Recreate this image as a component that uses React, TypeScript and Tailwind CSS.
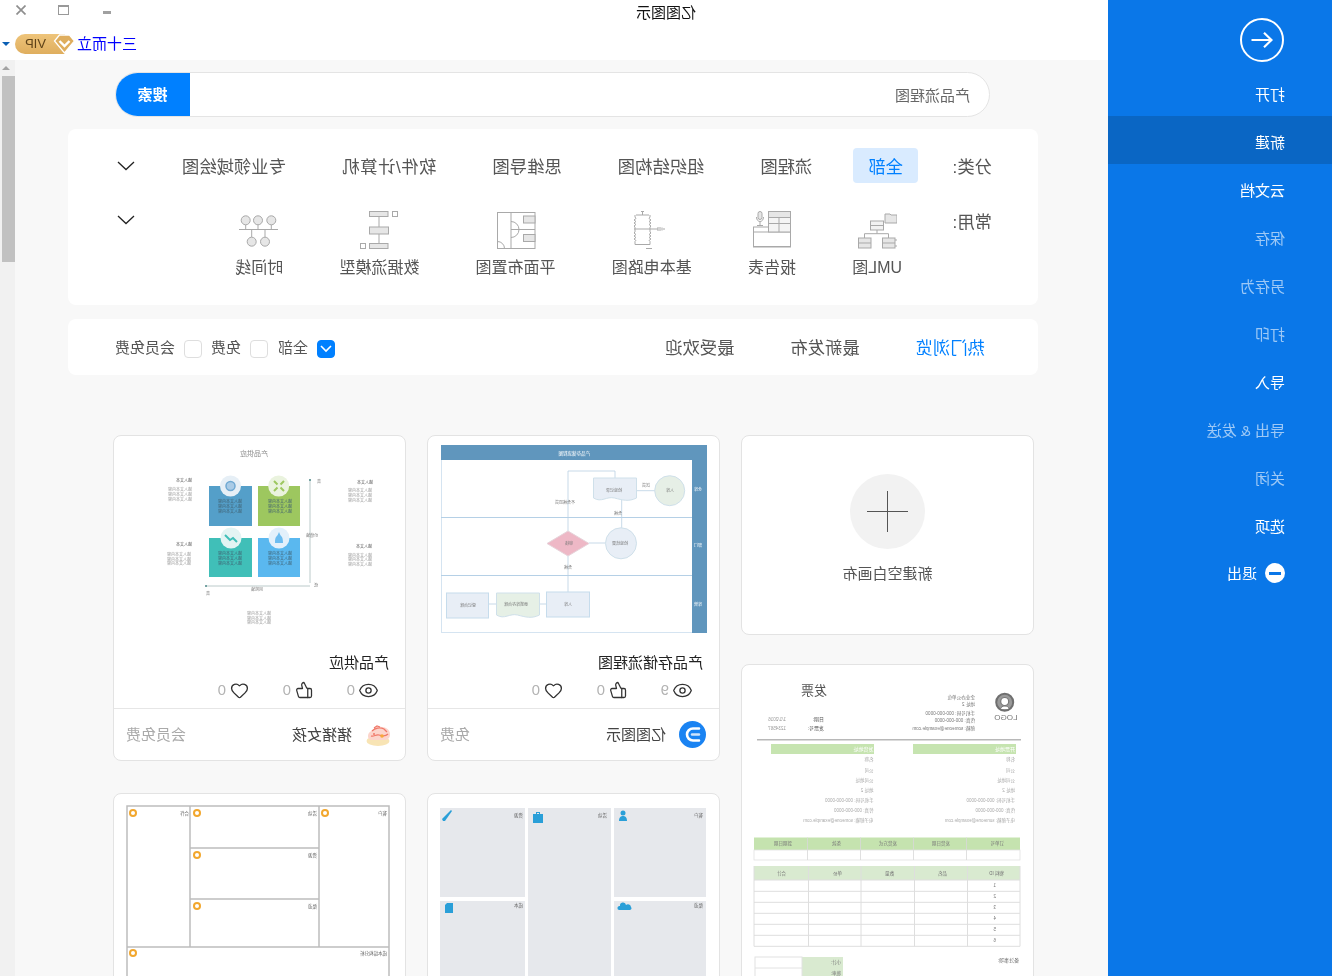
import React from 'react';
import { Eye, Heart, ThumbsUp } from 'lucide-react';

const GRAY = '#a9a9a9';
const FILL = '#e6e6e6';

const menu = [
  { label: '打开', on: true },
  { label: '新建', on: true, active: true },
  { label: '云文档', on: true },
  { label: '保存' },
  { label: '另存为' },
  { label: '打印' },
  { label: '导入', on: true },
  { label: '导出 & 发送' },
  { label: '关闭' },
  { label: '选项', on: true },
];

const categories = ['全部', '流程图', '组织结构图', '思维导图', '软件/计算机', '专业领域绘图'];

// the little drawings are written in picture coordinates, the svg flips itself back
const UmlIcon = () => (
  <svg viewBox="0 0 40 40" className="w-10 h-10 -scale-x-100" fill="none" stroke={GRAY}>
    <path d="M28 4h5l1 1h6v8H28z" fill={FILL} />
    <rect x="13.5" y="11" width="13" height="9" fill="#f2f2f2" />
    <path d="M13.5 15.5h13M20 20v3.7M7.5 28v-4.3h24V28" />
    <rect x="1.5" y="28" width="12.5" height="10" fill={FILL} />
    <rect x="25.5" y="28" width="12.5" height="10" fill={FILL} />
    <path d="M1.5 33h12.500M25.500 33H38M38 30h2M38 36h2" />
  </svg>
);

const ReportIcon = () => (
  <svg viewBox="0 0 40 40" className="w-10 h-10 -scale-x-100" fill="none" stroke={GRAY}>
    <rect x="1.500" y="17" width="37" height="20" />
    <path d="M1.500 22h37M1.500 36.500h37" />
    <rect x="16.500" y="1.500" width="22" height="20.500" fill="#f4f4f4" />
    <rect x="16.500" y="1.500" width="22" height="6" fill={FILL} />
    <path d="M16.500 13.500h22M27 7.500V22" />
    <rect x="6" y="1.500" width="4" height="8" rx="2" fill={FILL} />
    <path d="M4.500 7c0 6 7 6 7 0M8 12v3M5 15.500h6" />
  </svg>
);

const CircuitIcon = () => (
  <svg viewBox="0 0 40 40" className="w-10 h-10 -scale-x-100" fill="none" stroke={GRAY}>
    <path d="M9 1.500h3M10.500 2v3M4 5h13" />
    <path d="M3 19v-2l-1-1 2-1.500-2-1.500 2-1.500-2-1.500 2-1.500L3 7V5" />
    <path d="M18 19v-2l1-1-2-1.500 2-1.500-2-1.500 2-1.500-2-1.500L18 7V5" />
    <path d="M2 19h24" />
    <path d="M26 17v4M28 17v4M30 17.500v3M32 18v2" />
    <path d="M3 19v3l-1 1 2 1.500-2 1.500 2 1.500-2 1.500 2 1.500-1 1v3h15" />
    <path d="M18 19v3l1 1-2 1.500 2 1.500-2 1.500 2 1.500-2 1.500 1 1v3" />
    <path d="M14 38.500h6" />
  </svg>
);

const PlanIcon = () => (
  <svg viewBox="0 0 40 40" className="w-10 h-10 -scale-x-100" fill="none" stroke={GRAY}>
    <rect x="1.500" y="2.500" width="37.500" height="36" />
    <path d="M15 2.500v36M15 19.500h24M15 11.500a8 8 0 0 1 0 16M1.500 31.500a7 7 0 0 1 7 7" />
    <rect x="27.500" y="6" width="11.500" height="7" fill={FILL} />
    <rect x="27.500" y="24.500" width="11.500" height="7" fill={FILL} />
  </svg>
);

const DataFlowIcon = () => (
  <svg viewBox="0 0 40 40" className="w-10 h-10 -scale-x-100" fill="none" stroke={GRAY}>
    <path d="M20 6.500v27" />
    <rect x="10.500" y="1.500" width="18.500" height="5" fill={FILL} />
    <rect x="10.500" y="17" width="19" height="7" fill={FILL} />
    <rect x="10.500" y="33.500" width="18.500" height="5" fill={FILL} />
    <rect x="33.500" y="1.500" width="5" height="5" />
    <rect x="1.500" y="33.500" width="5" height="5" />
  </svg>
);

const TimelineIcon = () => (
  <svg viewBox="0 0 40 40" className="w-10 h-10 -scale-x-100" fill="none" stroke={GRAY}>
    <path d="M0 19.500h39M6.700 15v5M19 15v5M32.300 15v5M12.700 19.500V27M26 19.500V27" />
    <circle cx="6.700" cy="10.300" r="4.500" fill={FILL} />
    <circle cx="19" cy="10.300" r="4.500" fill={FILL} />
    <circle cx="32.300" cy="10.300" r="4.500" fill={FILL} />
    <circle cx="12.700" cy="31.700" r="4.500" fill={FILL} />
    <circle cx="26" cy="31.700" r="4.500" fill={FILL} />
  </svg>
);

const common = [
  { label: 'UML图', icon: <UmlIcon /> },
  { label: '报告表', icon: <ReportIcon /> },
  { label: '基本电路图', icon: <CircuitIcon /> },
  { label: '平面布置图', icon: <PlanIcon /> },
  { label: '数据流模型', icon: <DataFlowIcon /> },
  { label: '时间线', icon: <TimelineIcon /> },
];

const Lines = ({ x, ys, size = 4, fill = '#8a8a8a', text = '输入文本内容' }: { x: number; ys: number[]; size?: number; fill?: string; text?: string }) => (
  <>
    {ys.map((y) => (
      <text key={y} x={x} y={y} fontSize={size} fill={fill}>
        {text}
      </text>
    ))}
  </>
);

const SupplyThumb = () => (
  <svg viewBox="1 1 291 216" className="block w-full h-[216px] blur-[0.3px]">
    <text x="138" y="21" fontSize="7" fill="#888">产品供应</text>
    <rect x="154" y="51" width="43" height="40" fill="#549fc9" />
    <rect x="106" y="51" width="42" height="40" fill="#9dc75f" />
    <rect x="154" y="103" width="43" height="39" fill="#40bfb8" />
    <rect x="106" y="103" width="42" height="39" fill="#5ab8ef" />
    <circle cx="175.500" cy="51" r="10.500" fill="#e6eff6" />
    <circle cx="127.300" cy="51" r="10.500" fill="#eaf3de" />
    <circle cx="175" cy="103" r="10.500" fill="#e3f4f3" />
    <circle cx="127" cy="103" r="10.500" fill="#e3f0fb" />
    <circle cx="175.500" cy="51" r="4.500" fill="#a9cbe6" stroke="#6fa9d2" strokeWidth="1.500" />
    <path d="M122 46l3.500 3.500M132 46l-3.500 3.500M122 56l3.500-3.500M132 56l-3.500-3.500" stroke="#9dc75f" strokeWidth="2" />
    <path d="M169 107l4-4 3 2 5-5" fill="none" stroke="#40bfb8" strokeWidth="2" />
    <path d="M123 108c0-8 2-5 4-11 2 6 4 3 4 11z" fill="#6cbcf0" />
    <Lines x={164} ys={[68, 73, 78, 120, 125, 130]} fill="#3f5f6f" />
    <Lines x={114} ys={[68, 73, 78, 120, 125, 130]} fill="#3f5f6f" />
    <path d="M96 44v104M96 151h104" stroke="#a9bcbc" strokeWidth="0.800" fill="none" />
    <circle cx="96" cy="45" r="1" fill="#4e8a8a" />
    <circle cx="200" cy="151" r="1" fill="#4e8a8a" />
    <Lines x={214} ys={[47]} text="输入文本" fill="#555" />
    <Lines x={214} ys={[56, 61, 66]} fill="#999" />
    <Lines x={33} ys={[49]} text="输入文本" fill="#555" />
    <Lines x={34} ys={[57, 62, 67]} fill="#999" />
    <Lines x={214} ys={[111]} text="输入文本" fill="#555" />
    <Lines x={215} ys={[121, 126, 130]} fill="#999" />
    <Lines x={34} ys={[113]} text="输入文本" fill="#555" />
    <Lines x={34} ys={[122, 126, 131]} fill="#999" />
    <Lines x={135} ys={[180, 185, 189]} fill="#999" />
    <text x="88" y="102" fontSize="4" fill="#777">价值轴</text>
    <text x="143" y="156" fontSize="4" fill="#777">风险轴</text>
    <text x="85" y="48" fontSize="4" fill="#777">高</text>
    <text x="88" y="152" fontSize="4" fill="#777">低</text>
    <text x="196" y="160" fontSize="4" fill="#777">高</text>
  </svg>
);

const FlowThumb = () => (
  <svg viewBox="1 1 291 216" className="block w-full h-[216px] blur-[0.3px]">
    <rect x="13.500" y="10.500" width="265" height="187" fill="#fff" stroke="#d5e4f1" />
    <rect x="13" y="10" width="266" height="15" fill="#6096bd" />
    <rect x="13" y="25" width="15" height="173" fill="#6096bd" />
    <path d="M28 82.500h251M28 140.500h251" stroke="#b5d0e6" strokeWidth="1" />
    <text x="130" y="20" fontSize="4.500" fill="#fff">产品存储流程图</text>
    <text x="18" y="56" fontSize="4" fill="#fff">仓库</text>
    <text x="18" y="112" fontSize="4" fill="#fff">部门</text>
    <text x="18" y="171" fontSize="4" fill="#fff">库管</text>
    <g fill="none" stroke="#b9cfe2" strokeWidth="0.800">
      <path d="M65 55.700h18M98.300 65v28M114.700 108H131M152 96V36h-47v7M152 121v36M173.700 169h6.500M224 169h7" />
    </g>
    <circle cx="50.300" cy="55.700" r="15" fill="#e6efe6" stroke="#cfe0ea" />
    <path d="M83.500 43h43v20c-8 5-13-2-21 0s-14 4-22 0z" fill="#e8eef6" stroke="#cfe0ea" />
    <circle cx="99" cy="108.300" r="15.500" fill="#e8eef6" stroke="#cfe0ea" />
    <path d="M131 108.500l21-12.500 21 12.500-21 12.500z" fill="#eeb8c6" stroke="#e6d3da" />
    <rect x="130.500" y="157" width="43" height="25" fill="#e8eef6" stroke="#c6dcec" />
    <path d="M180.500 158h43v22c-8 5-13-2-21 0s-14 4-22 0z" fill="#e6f0e6" stroke="#cfe0ea" />
    <rect x="231.500" y="158" width="42" height="25" fill="#e8eef6" stroke="#c6dcec" />
    <g fontSize="4" fill="#777">
      <text x="46" y="57">入库</text>
      <text x="98" y="57">检验记录</text>
      <text x="70" y="52">送货</text>
      <text x="98" y="80">合格</text>
      <text x="92" y="110">检验结果</text>
      <text x="147" y="110">审核</text>
      <text x="145" y="69">不合格退货</text>
      <text x="148" y="134">合格</text>
      <text x="148" y="171">入库</text>
      <text x="192" y="171">更新库存台账</text>
      <text x="244" y="172">登记台账</text>
    </g>
  </svg>
);

const InvoiceThumb = () => {
  const left = ['名称', '公司', '公司地址', '地址 2', '手机号码: 000-000-0000', '传真: 000-000-0000', '电子邮箱: someone@example.com'];
  const ys = [97, 108, 117.500, 128, 138, 148, 158];
  const rows = [216, 227.300, 238.300, 249.300, 260.300, 271.300, 282.300];
  return (
    <svg viewBox="1 1 291 320" className="block w-full h-[320px] blur-[0.35px]">
      <circle cx="29.300" cy="38.300" r="8.500" fill="#9a9a9a" stroke="#6f6f6f" strokeWidth="2" />
      <circle cx="29.300" cy="37.500" r="4" fill="#fff" stroke="#777" strokeWidth="1.200" />
      <path d="M25 45c0-4 8-4 8.500 0" fill="#fff" stroke="#777" />
      <text x="16.500" y="56" fontSize="8" fill="#777">LOGO</text>
      <g fontSize="4.600" fill="#777">
        <text x="59" y="34.500">企业办公单位</text>
        <text x="59" y="41.500">地址 2</text>
        <text x="59" y="50.500">手机号码: 000-000-0000</text>
        <text x="59" y="58">传真: 000-000-0000</text>
        <text x="59" y="66">邮箱: someone@example.com</text>
      </g>
      <text x="207" y="31" fontSize="13" fill="#555">发票</text>
      <g fontSize="5" fill="#555">
        <text x="210" y="56.500">日期:</text>
        <text x="210" y="66">发票号:</text>
      </g>
      <g fontSize="4.600" fill="#999">
        <text x="248" y="56.500">1/1/2016</text>
        <text x="248" y="66">1234567</text>
      </g>
      <path d="M13 75.700h264" stroke="#b8b8b8" strokeWidth="1.500" />
      <rect x="18" y="80" width="103" height="10" fill="#c6e4b0" />
      <rect x="160" y="80" width="103" height="10" fill="#c6e4b0" />
      <text x="19" y="87" fontSize="5" fill="#fff">开票地址</text>
      <text x="160.500" y="87" fontSize="5" fill="#fff">发货地址</text>
      {left.map((t, i) => (
        <text key={i} x={19} y={ys[i]} fontSize="4.500" fill="#aaa">{t}</text>
      ))}
      {left.map((t, i) => (
        <text key={i} x={160.500} y={ys[i]} fontSize="4.500" fill="#aaa">{t}</text>
      ))}
      <rect x="14" y="173.500" width="266" height="12.500" fill="#c5e3af" />
      <rect x="14" y="186" width="266" height="10" fill="#fff" stroke="#e2e2e2" strokeWidth="0.800" />
      <path d="M67.500 173.500V196M120.500 173.500V196M173.500 173.500V196M226.500 173.500V196" stroke="#d8d8d8" strokeWidth="0.800" />
      <g fontSize="4.500" fill="#777">
        <text x="30" y="181">订单号</text>
        <text x="84" y="181">发货日期</text>
        <text x="137" y="181">发货方式</text>
        <text x="193" y="181">条款</text>
        <text x="242" y="181">到期日期</text>
      </g>
      <rect x="14" y="202" width="266" height="14" fill="#d9ead0" />
      {rows.map((y) => (
        <path key={y} d={`M14 ${y}h266`} stroke="#dedede" strokeWidth="1" />
      ))}
      <path d="M14 202v80.300M66.500 202v80.300M119.500 202v80.300M173 202v80.300M225.500 202v80.300M280 202v80.300" stroke="#dedede" strokeWidth="1" />
      <g fontSize="4.500" fill="#777">
        <text x="30" y="211">物料 ID</text>
        <text x="87" y="211">品名</text>
        <text x="140" y="211">数量</text>
        <text x="192" y="211">单价</text>
        <text x="248" y="211">合计</text>
        {[1, 2, 3, 4, 5, 6].map((n, i) => (
          <text key={n} x="38" y={223 + i * 11}>{n}</text>
        ))}
      </g>
      <text x="15" y="298" fontSize="5" fill="#666">备注事项:</text>
      <rect x="191" y="293" width="41" height="30" fill="#d9ead0" />
      <rect x="232" y="293" width="47" height="30" fill="#fff" stroke="#e2e2e2" />
      <path d="M232 304h47" stroke="#e2e2e2" />
      <text x="193" y="300" fontSize="4.500" fill="#777">小计:</text>
      <text x="193" y="311" fontSize="4.500" fill="#777">税率:</text>
    </svg>
  );
};

const CanvasThumb = () => {
  const dots: [number, number, string, number, number][] = [
    [273, 20, '合作', 217, 20],
    [209, 20, '活动', 89, 20],
    [209, 62, '资源', 89, 62],
    [209, 113, '渠道', 89, 113],
    [81, 20, '客户', 19, 20],
    [273, 160, '成本结构分析', 19, 160],
  ];
  return (
    <svg viewBox="1 1 291 200" className="block w-full h-[200px] blur-[0.3px]">
      <g fill="none" stroke="#bdbdbd" strokeWidth="1.500">
        <rect x="17" y="13" width="262" height="190" />
        <path d="M216 13v141M87 13v141M87 55h129M87 106h129M17 154h262" />
      </g>
      {dots.map(([x, y, t, tx, ty]) => (
        <g key={t}>
          <circle cx={x} cy={y} r="4" fill="#f2a72e" />
          <circle cx={x} cy={y} r="2" fill="#fff" />
          <text x={tx} y={ty + 2} fontSize="4.500" fill="#666">{t}</text>
        </g>
      ))}
    </svg>
  );
};

const GridThumb = () => (
  <svg viewBox="1 1 291 200" className="block w-full h-[200px] blur-[0.3px]">
    <g fill="#e6e8ec">
      <rect x="14" y="15" width="92" height="89" />
      <rect x="14" y="108" width="92" height="100" />
      <rect x="109" y="15" width="83" height="200" />
      <rect x="195" y="15" width="85" height="89" />
      <rect x="195" y="108" width="85" height="100" />
    </g>
    <g fontSize="4.500" fill="#666">
      <text x="17" y="24">客户</text>
      <text x="113" y="24">活动</text>
      <text x="197" y="24">资源</text>
      <text x="17" y="114">渠道</text>
      <text x="197" y="114">成本</text>
    </g>
    <g fill="#2a9fd8">
      <circle cx="97" cy="20" r="2.500" />
      <path d="M93 28c0-4 2-5 4-5s4 1 4 5z" />
      <path d="M177 21h10v9h-10zM180 21v-2h4v2h-1v-1h-2v1z" />
      <path d="M268 18l1-1 9 9-1 2-2 0z" />
      <path d="M267 110h6l2 2v8h-8z" />
      <path d="M89 114a3 3 0 0 1 5-2 3 3 0 0 1 6 1 2 2 0 0 1 1 4H90a2 2 0 0 1-1-3z" />
    </g>
  </svg>
);

const EdrawLogo = () => (
  <svg viewBox="0 0 27 27" className="w-[27px] h-[27px] -scale-x-100">
    <circle cx="13.500" cy="13.500" r="13.500" fill="#1a83f2" />
    <path d="M20 7.500h-6a6 6 0 0 0 0 12h6" fill="none" stroke="#fff" strokeWidth="2.600" strokeLinecap="round" />
    <path d="M13 13.500h7" stroke="#cfe4fb" strokeWidth="2.400" strokeLinecap="round" />
  </svg>
);

const CakeLogo = () => (
  <svg viewBox="0 0 27 27" className="w-[27px] h-[27px] -scale-x-100 blur-[0.3px]">
    <ellipse cx="13" cy="20" rx="11.500" ry="5" fill="#f8e4b4" />
    <path d="M3 15c0-4 4-5 6-7 2-3 6-3 8-2 4 0 8 3 8 7 0 4-2 6-6 6H8c-3 0-5-1-5-4z" fill="#fcd5cc" />
    <path d="M7 10c3-3 8-4 12-2l3 3M6 15c3 1 5-2 8-1s6 2 9-1M9 7l3-2 3 1" fill="none" stroke="#f0796a" strokeWidth="1.300" />
    <circle cx="17" cy="15" r="1.800" fill="#f6a93b" />
    <circle cx="9" cy="13" r="1" fill="#f0796a" />
  </svg>
);

const Card = ({ title, views, avatar, author, tag, thumb }: { title: string; views: number; avatar: React.ReactNode; author: string; tag: string; thumb: React.ReactNode }) => (
  <div className="w-[293px] h-[326px] bg-white border border-[#e3e3e3] rounded-lg overflow-hidden shrink-0">
    {thumb}
    <div className="h-[22px] pl-[16px] text-[15px] leading-[22px] text-[#222]">{title}</div>
    <div className="flex h-[20px] mt-[6px] pl-[26px] text-[15px] leading-[20px] text-[#b3b3b3]">
      <div className="flex items-center gap-[3px] w-[66px]">
        <Eye size={21} strokeWidth={1.500} className="text-[#333]" />
        <span>{views}</span>
      </div>
      <div className="flex items-center gap-[4px] w-[64px]">
        <ThumbsUp size={18} strokeWidth={1.700} className="text-[#333]" />
        <span>0</span>
      </div>
      <div className="flex items-center gap-[4px]">
        <Heart size={19} strokeWidth={1.700} className="text-[#333]" />
        <span>0</span>
      </div>
    </div>
    <div className="flex items-center h-[52px] mt-[8px] pl-[13px] pr-[12px] border-t border-[#e6e6e6]">
      {avatar}
      <span className="ml-[13px] mt-[2px] text-[15px] text-[#444]">{author}</span>
      <span className="ml-auto mt-[2px] text-[15px] text-[#aaa]">{tag}</span>
    </div>
  </div>
);

const Chevron = () => (
  <svg width="18" height="10" viewBox="0 0 18 10" fill="none" stroke="#222" strokeWidth="1.300">
    <path d="M1 1l8 7.500L17 1" />
  </svg>
);

const Checkbox = ({ checked, label }: { checked?: boolean; label: string }) => (
  <div className="flex items-center gap-[9px]">
    <span className={`flex items-center justify-center w-[18px] h-[18px] rounded-[4px] border ${checked ? 'bg-[#0080ff] border-[#0080ff]' : 'bg-white border-[#dedede]'}`}>
      {checked && (
        <svg width="12" height="8" viewBox="0 0 12 8" fill="none" stroke="#fff" strokeWidth="1.600">
          <path d="M1 1l5 5 5-5" />
        </svg>
      )}
    </span>
    <span className="-mt-[2px] text-[15px] text-[#555]">{label}</span>
  </div>
);

export default function App() {
  return (
    <div className="flex w-[1332px] h-[976px] overflow-hidden -scale-x-100 bg-white font-['Liberation_Sans','Noto_Sans_CJK_SC',sans-serif]">
      {/* side menu */}
      <aside className="w-[224px] shrink-0 bg-[#0a77e8] text-[15px]">
        <div className="h-[68px] pt-[18px] pl-[48px]">
          <div className="flex items-center justify-center w-[44px] h-[44px] rounded-full border-[2.500px] border-white">
            <svg width="22" height="16" viewBox="0 0 22 16" fill="none" stroke="#fff" strokeWidth="2.200">
              <path d="M1.500 8H21.500M9 .8L1.500 8 9 15.200" />
            </svg>
          </div>
        </div>
        {menu.map((item) => (
          <div
            key={item.label}
            className={`flex items-center h-12 pl-[47px] pt-[6px] ${item.active ? 'bg-[#0a66c4]' : ''} ${item.on ? 'text-white' : 'text-white/60'}`}
          >
            {item.label}
          </div>
        ))}
        <div className="flex items-center h-12 pl-[47px] pt-1 text-white">
          <span className="flex items-center justify-center w-[20px] h-[20px] -mt-[2px] rounded-full bg-white">
            <span className="w-[12px] h-[3px] bg-[#0a77e8]" />
          </span>
          <span className="ml-[8px]">退出</span>
        </div>
      </aside>

      <main className="flex-1 flex flex-col min-w-0">
        {/* title bar */}
        <header className="h-[60px] shrink-0 bg-white relative">
          <div className="h-[24px] pt-px pl-[412px] text-[15px] leading-[24px] text-[#111]">亿图图示</div>
          <div className="flex items-center h-[24px] mt-[8px] pl-[971px]">
            <span className="text-[15px] text-[#0000ff]">三十而立</span>
            <span className="relative ml-[2px] w-[60px] h-[20px]">
              <span className="absolute left-[10px] right-0 top-0 bottom-0 rounded-r-full bg-gradient-to-b from-[#eec47a] to-[#dfae5e] text-[13px] leading-[20px] text-[#5f4319] pl-[19px]">VIP</span>
              <svg className="absolute -left-px top-0 -scale-x-100" width="23" height="20" viewBox="0 0 22 20">
                <path d="M6 1h10l5 6-10 12L1 7z" fill="#dfae5e" stroke="#fff" strokeWidth="1.300" />
                <path d="M6 7l5 5 5-5" fill="none" stroke="#fff" strokeWidth="2.400" />
              </svg>
            </span>
            <span className="ml-[5px] w-0 h-0 border-x-[4px] border-x-transparent border-t-[4px] border-t-[#0a5fb4]" />
          </div>
          <div className="absolute right-[103px] top-[11px] w-[8px] h-[3px] bg-[#a0a0a0]" />
          <div className="absolute right-[58px] top-[5px] w-[11px] h-[10px] border border-[#999] border-t-2" />
          <svg className="absolute right-[16px] top-[5px]" width="10" height="10" viewBox="0 0 10 10" stroke="#8f8f8f" strokeWidth="1.700">
            <path d="M.5.5l9 9M9.500.5l-9 9" />
          </svg>
        </header>

        <div className="flex-1 flex min-h-0">
          <div className="flex-1 bg-[#f8f8f8] overflow-hidden">
            {/* search */}
            <div className="flex w-[875px] h-[45px] ml-[118px] mt-[12px] bg-white border border-[#e4e4e4] rounded-full overflow-hidden">
              <div className="flex-1 pl-[19px] text-[15px] leading-[45px] text-[#666]">产品流程图</div>
              <button className="w-[75px] -my-px -mr-px pt-[2px] bg-[#0080ff] text-[15px] font-bold text-white">搜索</button>
            </div>

            {/* filter panel */}
            <section className="w-[970px] h-[176px] ml-[70px] mt-[12px] pt-[19px] pl-[46px] pr-[49px] bg-white rounded-lg">
              <div className="flex items-center h-[35px] text-[17.330px] text-[#555]">
                <span className="w-[74px] pt-[4px]">分类:</span>
                <div className="flex gap-[26px]">
                  {categories.map((c, i) => (
                    <span
                      key={c}
                      className={`h-[35px] px-[15px] pt-[2px] leading-[35px] rounded-[4px] ${i === 0 ? 'bg-[#d9ebff] text-[#0080ff]' : ''} ${i === 4 ? 'tracking-[0.5px]' : ''}`}
                    >
                      {c}
                    </span>
                  ))}
                </div>
                <span className="ml-auto"><Chevron /></span>
              </div>
              <div className="flex items-start mt-[27px]">
                <span className="w-[90px] text-[17.330px] leading-[25px] text-[#555]">常用:</span>
                <div className="flex gap-[56.200px]">
                  {common.map((c) => (
                    <div key={c.label} className="flex flex-col items-center">
                      {c.icon}
                      <span className="mt-[7px] text-[16px] leading-[22px] text-[#555]">{c.label}</span>
                    </div>
                  ))}
                </div>
                <span className="ml-auto mt-[5px]"><Chevron /></span>
              </div>
            </section>

            {/* sort + price */}
            <section className="flex items-center w-[970px] h-[56px] ml-[70px] mt-[14px] pl-[53px] pr-[47px] bg-white rounded-lg">
              <div className="flex gap-[56px] pt-[4px] text-[17.330px] text-[#555]">
                <span className="text-[#0080ff]">热门浏览</span>
                <span>最新发布</span>
                <span>最受欢迎</span>
              </div>
              <div className="flex gap-[10px] ml-auto pt-[4px]">
                <Checkbox checked label="全部" />
                <Checkbox label="免费" />
                <div className="-ml-px">
                  <Checkbox label="会员免费" />
                </div>
              </div>
            </section>

            {/* template cards */}
            <div className="flex gap-[21px] ml-[74px] mt-[60px]">
              <div className="flex flex-col gap-[29px]">
                <div className="flex flex-col items-center w-[293px] h-[200px] pt-[38px] bg-white border border-[#e3e3e3] rounded-lg">
                  <div className="relative w-[75px] h-[75px] rounded-full bg-[#f2f2f2]">
                    <span className="absolute left-[17px] top-[37px] w-[41px] h-px bg-[#555]" />
                    <span className="absolute left-[37px] top-[17px] w-px h-[41px] bg-[#555]" />
                  </div>
                  <span className="mt-[14px] text-[15px] text-[#555]">新建空白画布</span>
                </div>
                <div className="w-[293px] h-[400px] bg-white border border-[#e3e3e3] rounded-lg overflow-hidden shrink-0">
                  <InvoiceThumb />
                </div>
              </div>
              <div className="flex flex-col gap-[32px]">
                <Card title="产品存储流程图" views={9} avatar={<EdrawLogo />} author="亿图图示" tag="免费" thumb={<FlowThumb />} />
                <div className="w-[293px] h-[300px] bg-white border border-[#e3e3e3] rounded-lg overflow-hidden shrink-0">
                  <GridThumb />
                </div>
              </div>
              <div className="flex flex-col gap-[32px]">
                <Card title="产品供应" views={0} avatar={<CakeLogo />} author="猪猪女孩" tag="会员免费" thumb={<SupplyThumb />} />
                <div className="w-[293px] h-[300px] bg-white border border-[#e3e3e3] rounded-lg overflow-hidden shrink-0">
                  <CanvasThumb />
                </div>
              </div>
            </div>
          </div>

          {/* scrollbar */}
          <div className="w-[15px] shrink-0 bg-[#f1f1f1] relative">
            <span className="absolute left-[5px] top-[6px] w-0 h-0 border-x-[4px] border-x-transparent border-b-[4px] border-b-[#a3a3a3]" />
            <div className="w-[13px] h-[186px] mt-[16px] bg-[#c1c1c1]" />
          </div>
        </div>
      </main>
    </div>
  );
}
